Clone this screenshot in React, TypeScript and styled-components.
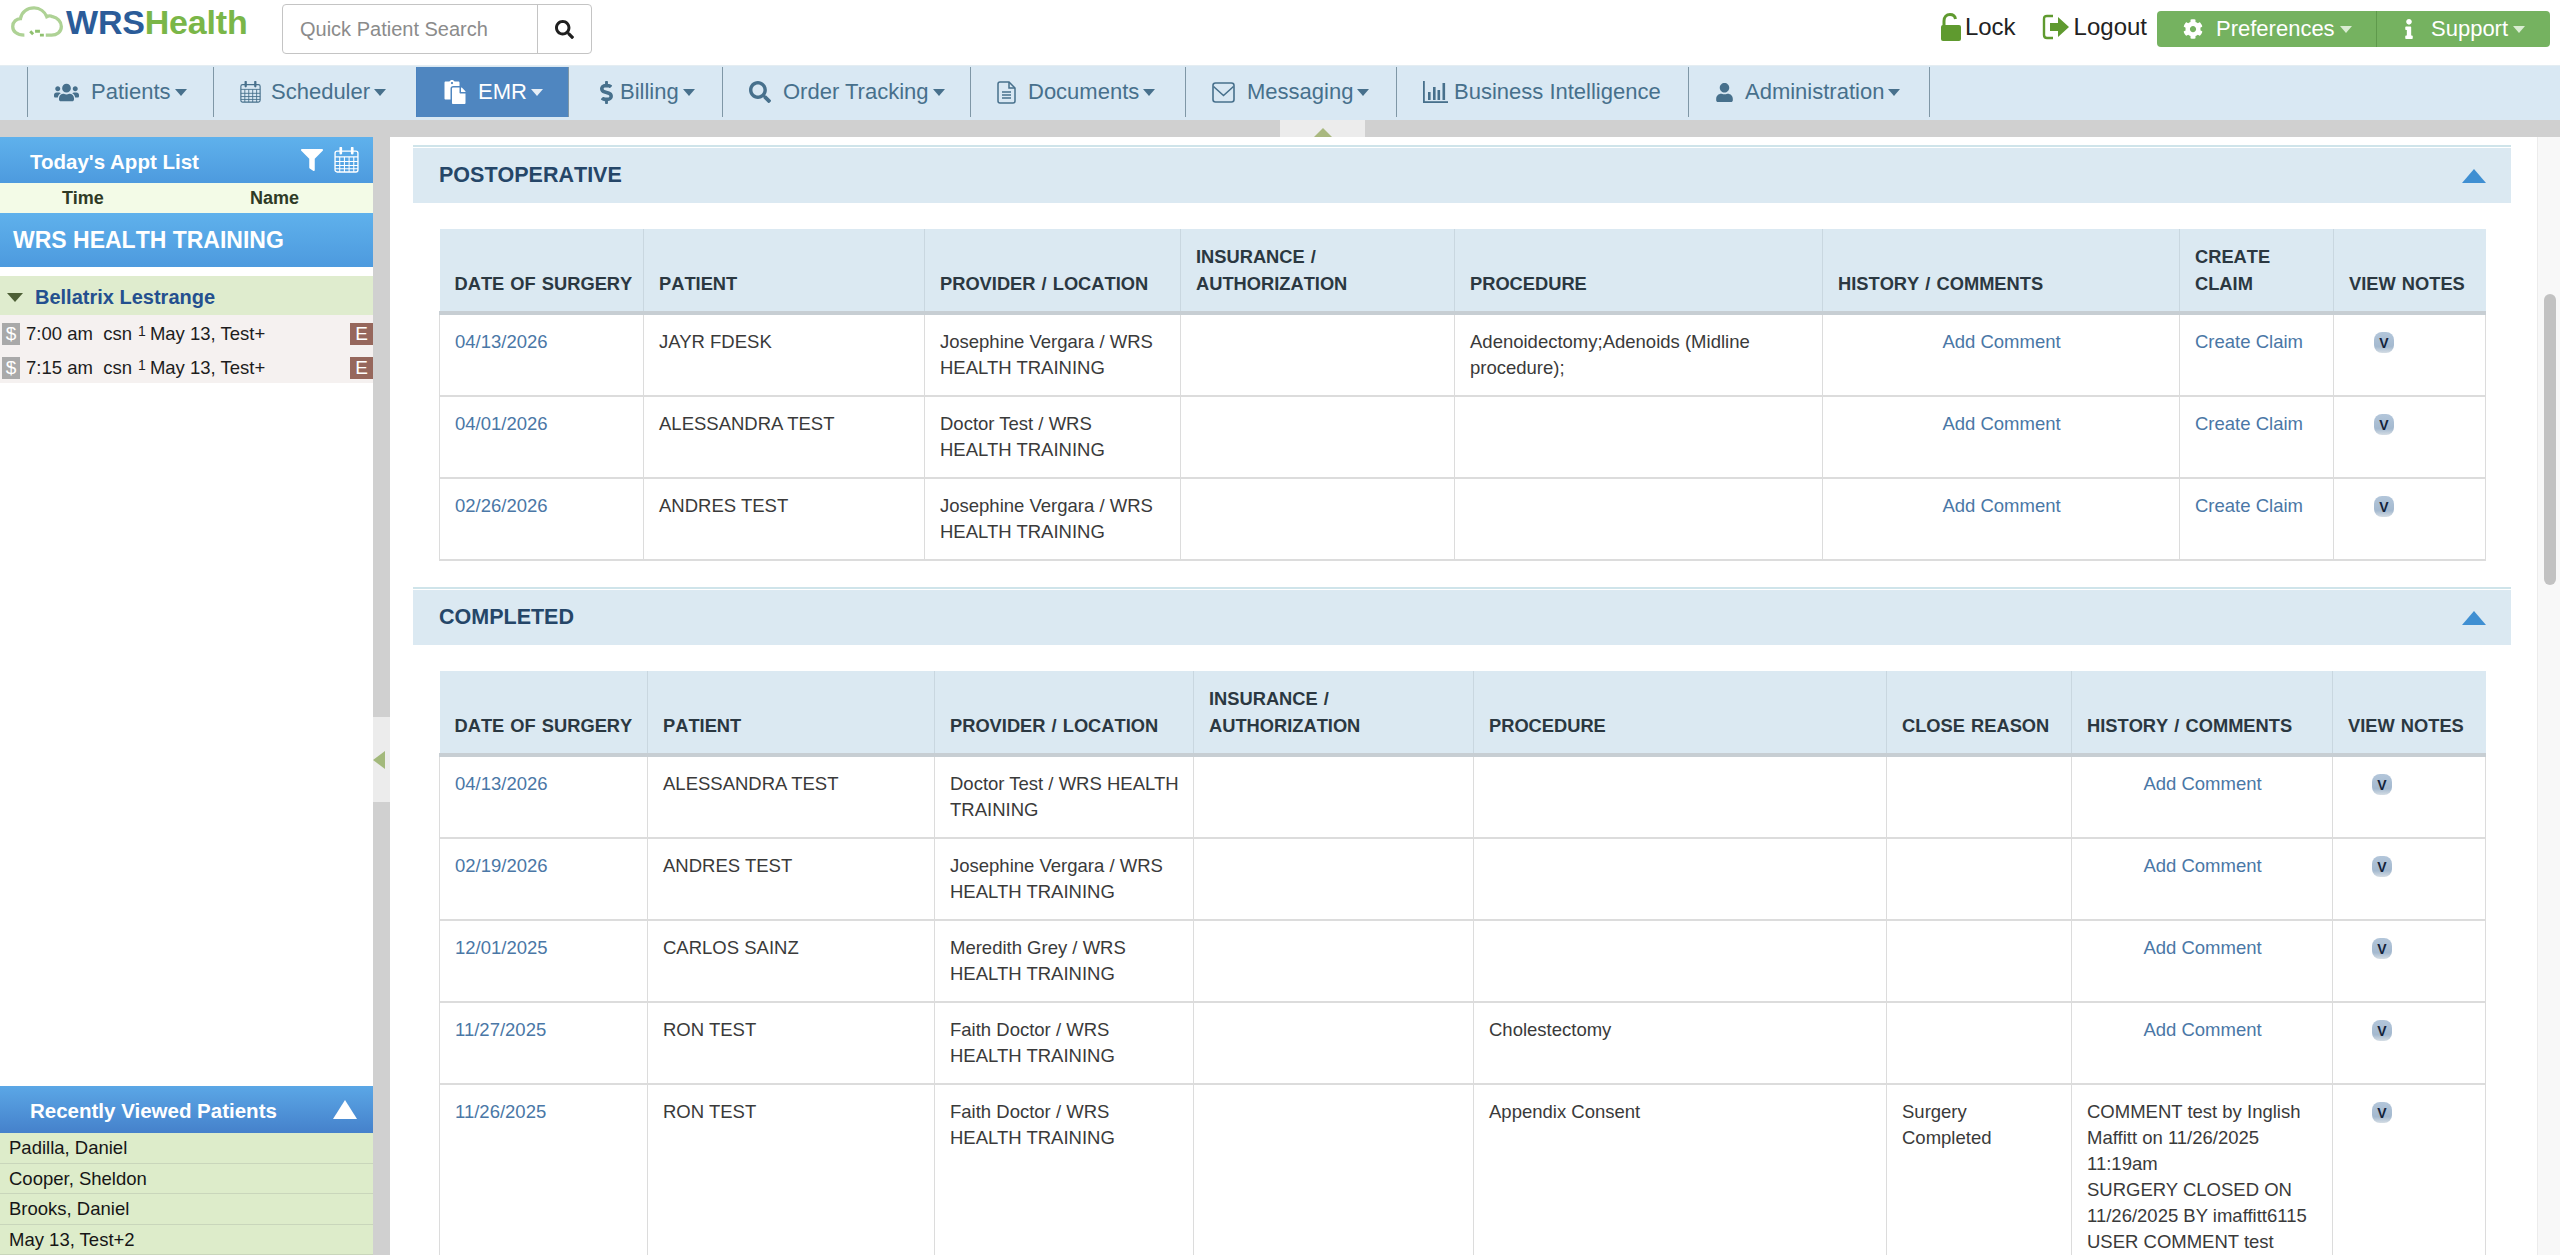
import React from 'react';
import styled, { createGlobalStyle } from 'styled-components';
import { FaCog, FaDollarSign, FaFilter, FaInfo, FaPaste, FaSearch, FaUser, FaUsers } from 'react-icons/fa';

const GlobalStyle = createGlobalStyle`
  html, body {
    margin: 0;
    padding: 0;
    background: #fff;
    font-family: "Liberation Sans", Arial, sans-serif;
  }
  * { box-sizing: border-box; }
`;

const Page = styled.div`
  display: flex;
  flex-direction: column;
  height: 1255px;
  overflow: hidden;
`;

/* top bar */
const TopBar = styled.header`
  display: flex;
  align-items: flex-start;
  height: 65px;
  padding: 4px 10px 0 10px;
`;

const Logo = styled.div`
  display: flex;
  align-items: center;
  width: 272px;
  height: 36px;
`;

const LogoWord = styled.span<{ $color: string }>`
  color: ${(p) => p.$color};
  font-size: 34px;
  font-weight: 700;
  letter-spacing: -0.2px;
`;

const SearchBox = styled.div`
  display: flex;
  width: 310px;
  height: 50px;
  border: 1px solid #c4c4c4;
  border-radius: 4px;
`;

const SearchInput = styled.input`
  flex: 1;
  min-width: 0;
  padding-left: 17px;
  border: 0;
  background: transparent;
  color: #444;
  font-family: inherit;
  font-size: 20px;
  outline: none;
  &::placeholder { color: #8b8b8b; }
`;

const SearchButton = styled.div`
  display: flex;
  align-items: center;
  justify-content: center;
  width: 54px;
  border-left: 1px solid #c4c4c4;
  color: #1f1f1f;
  font-size: 19px;
`;

const TopActions = styled.div`
  display: flex;
  align-items: flex-start;
  margin-left: auto;
  padding-top: 7px;
`;

const TopLink = styled.div<{ $gap: number }>`
  display: flex;
  align-items: center;
  gap: 4px;
  height: 32px;
  margin-right: ${(p) => p.$gap}px;
  color: #222;
  font-size: 24px;
`;

const GreenGroup = styled.div`
  display: flex;
  height: 36px;
  border-radius: 4px;
  background: #75b260;
  overflow: hidden;
`;

const GreenButton = styled.div<{ $width: number; $pad: number }>`
  display: flex;
  align-items: center;
  width: ${(p) => p.$width}px;
  padding-left: ${(p) => p.$pad}px;
  color: #fff;
  font-size: 22px;
  & + & { border-left: 1px solid #5f9a4c; }
  svg { font-size: 20px; }
`;

const GreenLabel = styled.span<{ $gap: number }>`
  margin: 0 5px 0 ${(p) => p.$gap}px;
`;

const Caret = styled.span<{ $color: string; $size?: number }>`
  display: inline-block;
  flex: none;
  border-left: ${(p) => p.$size ?? 6}px solid transparent;
  border-right: ${(p) => p.$size ?? 6}px solid transparent;
  border-top: ${(p) => (p.$size ?? 6) + 1}px solid ${(p) => p.$color};
`;

/* main menu */
const Nav = styled.nav`
  display: flex;
  height: 55px;
  padding: 1px 0 0 27px;
  border-top: 1px solid #e4edf2;
  background: #d9e8f3;
`;

const NavItem = styled.div<{ $active?: boolean; $width: number }>`
  display: flex;
  align-items: center;
  width: ${(p) => p.$width}px;
  height: 50px;
  padding-left: 26px;
  border-left: 1px solid ${(p) => (p.$active ? '#4a82bf' : '#7f97a6')};
  background: ${(p) => (p.$active ? '#4f86c0' : 'transparent')};
  color: ${(p) => (p.$active ? '#fff' : '#47708c')};
  font-size: 22px;
  white-space: nowrap;
`;

const NavIcon = styled.span<{ $slot: number; $size: number }>`
  display: flex;
  align-items: center;
  flex: none;
  width: ${(p) => p.$slot}px;
  font-size: ${(p) => p.$size}px;
`;

const NavEnd = styled.div`
  width: 1px;
  height: 50px;
  background: #7f97a6;
`;

const NavLabel = styled.span`
  margin-right: 4px;
`;

const Strip = styled.div`
  flex: none;
  height: 17px;
  padding-left: 1280px;
  background: #d0d0d0;
`;

const StripHandle = styled.div`
  display: flex;
  justify-content: center;
  width: 85px;
  height: 17px;
  padding-top: 5px;
  background: #ececec;
`;

const ArrowUp = styled.span<{ $color: string; $half: number; $tall: number }>`
  display: block;
  flex: none;
  border-left: ${(p) => p.$half}px solid transparent;
  border-right: ${(p) => p.$half}px solid transparent;
  border-bottom: ${(p) => p.$tall}px solid ${(p) => p.$color};
`;

const Body = styled.div`
  display: flex;
  flex: 1;
  min-height: 0;
`;

/* left column */
const Sidebar = styled.aside`
  display: flex;
  flex: none;
  flex-direction: column;
  justify-content: space-between;
  width: 373px;
`;

const SideHead = styled.div`
  display: flex;
  align-items: center;
  height: 46px;
  padding: 3px 14px 0 30px;
  background: linear-gradient(#5fb1ec, #4d9ade);
  color: #fff;
  font-size: 20.5px;
  font-weight: 700;
`;

const SideHeadTools = styled.div`
  display: flex;
  align-items: center;
  gap: 11px;
  margin: -3px 0 0 auto;
  svg { flex: none; }
`;

const ColumnRow = styled.div`
  display: grid;
  grid-template-columns: 188px 1fr;
  height: 30px;
  padding-left: 62px;
  background: #f3fbe7;
  color: #2e3a26;
  font-size: 18px;
  font-weight: 700;
  line-height: 31px;
`;

const LocationRow = styled.div`
  height: 54px;
  margin-bottom: 9px;
  padding-left: 13px;
  background: linear-gradient(#5fb1ec, #4d9ade);
  color: #fff;
  font-kerning: none;
  font-size: 23px;
  font-weight: 700;
  line-height: 54px;
`;

const ProviderRow = styled.div`
  display: flex;
  align-items: center;
  gap: 12px;
  height: 39px;
  padding: 3px 0 0 7px;
  background: #dfecce;
  color: #24508f;
  font-size: 20px;
  font-weight: 700;
`;

const ProviderCaret = styled.span`
  border-left: 8px solid transparent;
  border-right: 8px solid transparent;
  border-top: 9px solid #4d5f36;
`;

const ApptRow = styled.div`
  display: flex;
  align-items: center;
  height: 34px;
  padding: 4px 0 0 2px;
  background: #f5f1f0;
  color: #1d1d1d;
  font-size: 18.5px;
  white-space: pre;
`;

const Badge = styled.span<{ $color: string }>`
  display: flex;
  align-items: center;
  justify-content: center;
  flex: none;
  height: 22px;
  background: ${(p) => p.$color};
  color: #fff;
  font-size: 19px;
`;

const DollarBadge = styled(Badge)`
  width: 18px;
  margin-right: 6px;
`;

const EncounterBadge = styled(Badge)`
  width: 23px;
  margin-left: auto;
`;

const Sup = styled.span`
  align-self: flex-start;
  margin: 5px 4px 0 1px;
  font-size: 14px;
  line-height: 14px;
`;

const RecentHead = styled(SideHead)`
  height: 47px;
  padding-right: 16px;
  background: linear-gradient(#5ba7e6, #4581cb);
`;

const RecentRow = styled.div`
  height: 30.5px;
  padding-left: 9px;
  border-bottom: 1px solid #c9d6bb;
  background: #ddecca;
  color: #161616;
  font-size: 18.5px;
  line-height: 30px;
`;

const Splitter = styled.div`
  flex: none;
  width: 17px;
  padding-top: 580px;
  background: #d0d0d0;
`;

const SplitterHandle = styled.div`
  display: flex;
  align-items: center;
  height: 85px;
  background: #ececec;
`;

const ArrowLeft = styled.span`
  border-top: 9px solid transparent;
  border-bottom: 9px solid transparent;
  border-right: 12px solid #a3b97c;
`;

/* main content */
const Content = styled.main`
  flex: 1;
  min-width: 0;
  padding: 8px 26px 0 23px;
  overflow: hidden;
`;

const SectionHeader = styled.div`
  display: flex;
  align-items: center;
  justify-content: space-between;
  height: 58px;
  padding: 3px 25px 0 26px;
  background: linear-gradient(#cfe4ea 0 2px, #fff 2px 3px, #dbe9f2 3px);
  color: #254668;
  font-kerning: none;
  font-size: 21.5px;
  font-weight: 700;
`;

const Section = styled.section`
  margin-bottom: 26px;
`;

const Table = styled.table`
  width: calc(100% - 52px);
  margin: 26px 26px 0;
  border-collapse: collapse;
  table-layout: fixed;
  color: #3a3a3a;
  font-size: 18.5px;
  line-height: 26px;
`;

const HeadCell = styled.th`
  height: 84px;
  padding: 0 6px 14px 15px;
  border-right: 1px solid #c9d7e0;
  border-bottom: 4px solid #c7ced3;
  background: #dbe9f2;
  color: #2b3841;
  font-kerning: none;
  font-size: 18.3px;
  font-weight: 700;
  line-height: 27px;
  text-align: left;
  vertical-align: bottom;
  word-spacing: 1px;
  white-space: nowrap;
  &:last-child { border-right: 0; }
`;

const Cell = styled.td<{ $center?: boolean }>`
  height: 82px;
  padding: 14px 14px 14px 15px;
  border: 1px solid #dcdcdc;
  border-bottom-width: 2px;
  text-align: ${(p) => (p.$center ? 'center' : 'left')};
  vertical-align: top;
`;

const TextLink = styled.span`
  color: #4a77a6;
`;

const NotesCell = styled(Cell)`
  padding-left: 0;
`;

const NoteButton = styled.span<{ $offset: number }>`
  display: flex;
  align-items: center;
  justify-content: center;
  width: 20px;
  height: 21px;
  margin: 3px 0 0 ${(p) => p.$offset}px;
  border-radius: 8px;
  background: linear-gradient(#b3c6da, #a4b9cf 70%, #d5dde4);
  color: #14233a;
  font-size: 14px;
  font-weight: 700;
`;

const ScrollTrack = styled.div`
  flex: none;
  width: 23px;
  padding: 157px 4px 0 6px;
  border-left: 1px solid #ececec;
  background: #f8f8f8;
`;

const ScrollThumb = styled.div`
  height: 291px;
  border-radius: 7px;
  background: #c2c2c2;
`;

/* drawn icons */
const CloudLogo = () => (
  <svg width="56" height="35" viewBox="0 0 56 36" fill="none" stroke="#aed295" strokeWidth="3.4">
    <path d="M14 31C6 31 2 27 2 22c0-5 4-8 8-8 1-7 7-11 14-11 6 0 11 4 13 9 2-1 4-1 6 0 5 1 9 5 9 10 0 6-5 9-10 9h-6" />
    <path d="M20 27l3 3M30 31h4M25 27h5" stroke="#8fc06f" strokeWidth="3" />
  </svg>
);

const CalendarIcon = ({ color, size }: { color: string; size: number }) => (
  <svg width={size} height={size + 1} viewBox="0 0 24 25" fill="none" stroke={color} strokeWidth="1.3">
    <rect x="1" y="4" width="22" height="20" rx="2" />
    <path d="M1 9.5h22M1 14h22M1 17.7h22M1 21h22M5.5 9.5V24M10 9.5V24M14.5 9.5V24M19 9.5V24" strokeWidth="1" />
    <path d="M6.5 1v5M17.5 1v5" strokeWidth="2.6" strokeLinecap="round" />
  </svg>
);

const DocumentIcon = () => (
  <svg width="19" height="23" viewBox="0 0 19 23" fill="none" stroke="#47708c" strokeWidth="1.5">
    <path d="M3 1h9l6 6v13c0 1.200-.8 2-2 2H3c-1.200 0-2-.8-2-2V3c0-1.200.8-2 2-2z" />
    <path d="M12 1v6h6M5 11h9M5 14h9M5 17h9" />
  </svg>
);

const EnvelopeIcon = () => (
  <svg width="23" height="23" viewBox="0 0 23 23" fill="none" stroke="#47708c" strokeWidth="1.6">
    <rect x="1" y="2" width="21" height="19" rx="2.5" />
    <path d="M1.5 5.500l10 9 10-9" />
  </svg>
);

const ChartIcon = () => (
  <svg width="25" height="22" viewBox="0 0 25 22" fill="#47708c">
    <rect x="0" y="0" width="1.8" height="22" />
    <rect x="0" y="20.2" width="25" height="1.8" />
    <rect x="5" y="11" width="2.6" height="8" />
    <rect x="10" y="6" width="2.6" height="13" />
    <rect x="14.5" y="9" width="2.6" height="10" />
    <rect x="19.5" y="2" width="2.6" height="17" />
  </svg>
);

const OpenLock = () => (
  <svg width="20" height="28" viewBox="0 0 20 28" fill="none">
    <path d="M3 13V8c0-4 2.500-6.500 6-6.500 3 0 5 1.500 5.500 4.500" stroke="#5f9a2f" strokeWidth="3" />
    <rect x="0" y="12" width="20" height="16" rx="2" fill="#5f9a2f" />
  </svg>
);

const LogoutIcon = () => (
  <svg width="28" height="28" viewBox="0 0 28 28" fill="none">
    <path d="M11 3H5C3 3 2 4 2 6v16c0 2 1 3 3 3h6" stroke="#5f9a2f" strokeWidth="2.4" />
    <path d="M8 10h8V4l11 10-11 10v-6H8z" fill="#5f9a2f" />
  </svg>
);

type NavEntry = {
  label: string;
  icon: React.ReactNode;
  width: number;
  slot: number;
  size: number;
  active?: boolean;
  menu?: boolean;
};

const navItems: NavEntry[] = [
  { label: 'Patients', icon: <FaUsers />, width: 186, slot: 37, size: 25, menu: true },
  { label: 'Scheduler', icon: <CalendarIcon color="#47708c" size={21} />, width: 203, slot: 31, size: 22, menu: true },
  { label: 'EMR', icon: <FaPaste />, width: 152, slot: 35, size: 24, active: true, menu: true },
  { label: 'Billing', icon: <FaDollarSign />, width: 154, slot: 25, size: 23, menu: true },
  { label: 'Order Tracking', icon: <FaSearch />, width: 248, slot: 34, size: 22, menu: true },
  { label: 'Documents', icon: <DocumentIcon />, width: 215, slot: 31, size: 22, menu: true },
  { label: 'Messaging', icon: <EnvelopeIcon />, width: 211, slot: 35, size: 22, menu: true },
  { label: 'Business Intelligence', icon: <ChartIcon />, width: 292, slot: 31, size: 22 },
  { label: 'Administration', icon: <FaUser />, width: 241, slot: 30, size: 19, menu: true },
];

const appointments = ['7:00 am', '7:15 am'];
const recentPatients = ['Padilla, Daniel', 'Cooper, Sheldon', 'Brooks, Daniel', 'May 13, Test+2'];

const TRAINING = 'WRS HEALTH TRAINING';

const postHeaders = [
  ['DATE OF SURGERY'],
  ['PATIENT'],
  ['PROVIDER / LOCATION'],
  ['INSURANCE /', 'AUTHORIZATION'],
  ['PROCEDURE'],
  ['HISTORY / COMMENTS'],
  ['CREATE', 'CLAIM'],
  ['VIEW NOTES'],
];
const postWidths = [204, 281, 256, 274, 368, 357, 154, 152];

const postRows = [
  { date: '04/13/2026', patient: 'JAYR FDESK', provider: `Josephine Vergara / ${TRAINING}`, procedure: 'Adenoidectomy;Adenoids (Midline procedure);' },
  { date: '04/01/2026', patient: 'ALESSANDRA TEST', provider: `Doctor Test / ${TRAINING}`, procedure: '' },
  { date: '02/26/2026', patient: 'ANDRES TEST', provider: `Josephine Vergara / ${TRAINING}`, procedure: '' },
];

const doneHeaders = [
  ['DATE OF SURGERY'],
  ['PATIENT'],
  ['PROVIDER / LOCATION'],
  ['INSURANCE /', 'AUTHORIZATION'],
  ['PROCEDURE'],
  ['CLOSE REASON'],
  ['HISTORY / COMMENTS'],
  ['VIEW NOTES'],
];
const doneWidths = [208, 287, 259, 280, 413, 185, 261, 153];

const doneRows = [
  { date: '04/13/2026', patient: 'ALESSANDRA TEST', provider: `Doctor Test / ${TRAINING}`, procedure: '' },
  { date: '02/19/2026', patient: 'ANDRES TEST', provider: `Josephine Vergara / ${TRAINING}`, procedure: '' },
  { date: '12/01/2025', patient: 'CARLOS SAINZ', provider: `Meredith Grey / ${TRAINING}`, procedure: '' },
  { date: '11/27/2025', patient: 'RON TEST', provider: `Faith Doctor / ${TRAINING}`, procedure: 'Cholestectomy' },
  {
    date: '11/26/2025',
    patient: 'RON TEST',
    provider: `Faith Doctor / ${TRAINING}`,
    procedure: 'Appendix Consent',
    reason: 'Surgery Completed',
    comments: [
      'COMMENT test by Inglish Maffitt on 11/26/2025 11:19am',
      'SURGERY CLOSED ON 11/26/2025 BY imaffitt6115',
      'USER COMMENT test',
    ],
  },
];

const TableHead = ({ headers, widths }: { headers: string[][]; widths: number[] }) => (
  <>
    <colgroup>
      {widths.map((w, i) => (
        <col key={i} style={{ width: w }} />
      ))}
    </colgroup>
    <thead>
      <tr>
        {headers.map((lines) => (
          <HeadCell key={lines[0]}>
            {lines.map((line) => (
              <div key={line}>{line}</div>
            ))}
          </HeadCell>
        ))}
      </tr>
    </thead>
  </>
);

const App = () => (
  <Page>
    <GlobalStyle />
    <TopBar>
      <Logo>
        <CloudLogo />
        <LogoWord $color="#2b5c99">WRS</LogoWord>
        <LogoWord $color="#7ab648">Health</LogoWord>
      </Logo>
      <SearchBox>
        <SearchInput type="text" placeholder="Quick Patient Search" />
        <SearchButton>
          <FaSearch />
        </SearchButton>
      </SearchBox>
      <TopActions>
        <TopLink $gap={26}>
          <OpenLock />
          Lock
        </TopLink>
        <TopLink $gap={10}>
          <LogoutIcon />
          Logout
        </TopLink>
        <GreenGroup>
          <GreenButton $width={219} $pad={26}>
            <FaCog />
            <GreenLabel $gap={13}>Preferences</GreenLabel>
            <Caret $color="#d9ecd2" />
          </GreenButton>
          <GreenButton $width={174} $pad={22}>
            <FaInfo />
            <GreenLabel $gap={12}>Support</GreenLabel>
            <Caret $color="#d9ecd2" />
          </GreenButton>
        </GreenGroup>
      </TopActions>
    </TopBar>

    <Nav>
      {navItems.map((item) => (
        <NavItem key={item.label} $active={item.active} $width={item.width}>
          <NavIcon $slot={item.slot} $size={item.size}>
            {item.icon}
          </NavIcon>
          <NavLabel>{item.label}</NavLabel>
          {item.menu && <Caret $color={item.active ? '#e6eef6' : '#47708c'} />}
        </NavItem>
      ))}
      <NavEnd />
    </Nav>
    <Strip>
      <StripHandle>
        <ArrowUp $color="#a9b87f" $half={9} $tall={9} />
      </StripHandle>
    </Strip>

    <Body>
      <Sidebar>
        <div>
          <SideHead>
            Today's Appt List
            <SideHeadTools>
              <FaFilter size={22} color="#fff" />
              <CalendarIcon color="#fff" size={25} />
            </SideHeadTools>
          </SideHead>
          <ColumnRow>
            <span>Time</span>
            <span>Name</span>
          </ColumnRow>
          <LocationRow>{TRAINING}</LocationRow>
          <ProviderRow>
            <ProviderCaret />
            Bellatrix Lestrange
          </ProviderRow>
          {appointments.map((time) => (
            <ApptRow key={time}>
              <DollarBadge $color="#a9a9a9">$</DollarBadge>
              {time}  csn <Sup>1</Sup>May 13, Test+
              <EncounterBadge $color="#96675c">E</EncounterBadge>
            </ApptRow>
          ))}
        </div>
        <div>
          <RecentHead>
            Recently Viewed Patients
            <SideHeadTools>
              <ArrowUp $color="#fff" $half={12} $tall={19} />
            </SideHeadTools>
          </RecentHead>
          {recentPatients.map((name) => (
            <RecentRow key={name}>{name}</RecentRow>
          ))}
        </div>
      </Sidebar>
      <Splitter>
        <SplitterHandle>
          <ArrowLeft />
        </SplitterHandle>
      </Splitter>

      <Content>
        <Section>
          <SectionHeader>
            POSTOPERATIVE
            <ArrowUp $color="#3f8fd2" $half={12} $tall={14} />
          </SectionHeader>
          <Table>
            <TableHead headers={postHeaders} widths={postWidths} />
            <tbody>
              {postRows.map((row) => (
                <tr key={row.date}>
                  <Cell>
                    <TextLink>{row.date}</TextLink>
                  </Cell>
                  <Cell>{row.patient}</Cell>
                  <Cell>{row.provider}</Cell>
                  <Cell />
                  <Cell>{row.procedure}</Cell>
                  <Cell $center>
                    <TextLink>Add Comment</TextLink>
                  </Cell>
                  <Cell>
                    <TextLink>Create Claim</TextLink>
                  </Cell>
                  <NotesCell>
                    <NoteButton $offset={40}>V</NoteButton>
                  </NotesCell>
                </tr>
              ))}
            </tbody>
          </Table>
        </Section>

        <Section>
          <SectionHeader>
            COMPLETED
            <ArrowUp $color="#3f8fd2" $half={12} $tall={14} />
          </SectionHeader>
          <Table>
            <TableHead headers={doneHeaders} widths={doneWidths} />
            <tbody>
              {doneRows.map((row) => (
                <tr key={row.date}>
                  <Cell>
                    <TextLink>{row.date}</TextLink>
                  </Cell>
                  <Cell>{row.patient}</Cell>
                  <Cell>{row.provider}</Cell>
                  <Cell />
                  <Cell>{row.procedure}</Cell>
                  <Cell>{row.reason}</Cell>
                  <Cell $center={!row.comments}>
                    {row.comments ? (
                      row.comments.map((line) => <div key={line}>{line}</div>)
                    ) : (
                      <TextLink>Add Comment</TextLink>
                    )}
                  </Cell>
                  <NotesCell>
                    <NoteButton $offset={39}>V</NoteButton>
                  </NotesCell>
                </tr>
              ))}
            </tbody>
          </Table>
        </Section>
      </Content>
      <ScrollTrack>
        <ScrollThumb />
      </ScrollTrack>
    </Body>
  </Page>
);

export default App;
